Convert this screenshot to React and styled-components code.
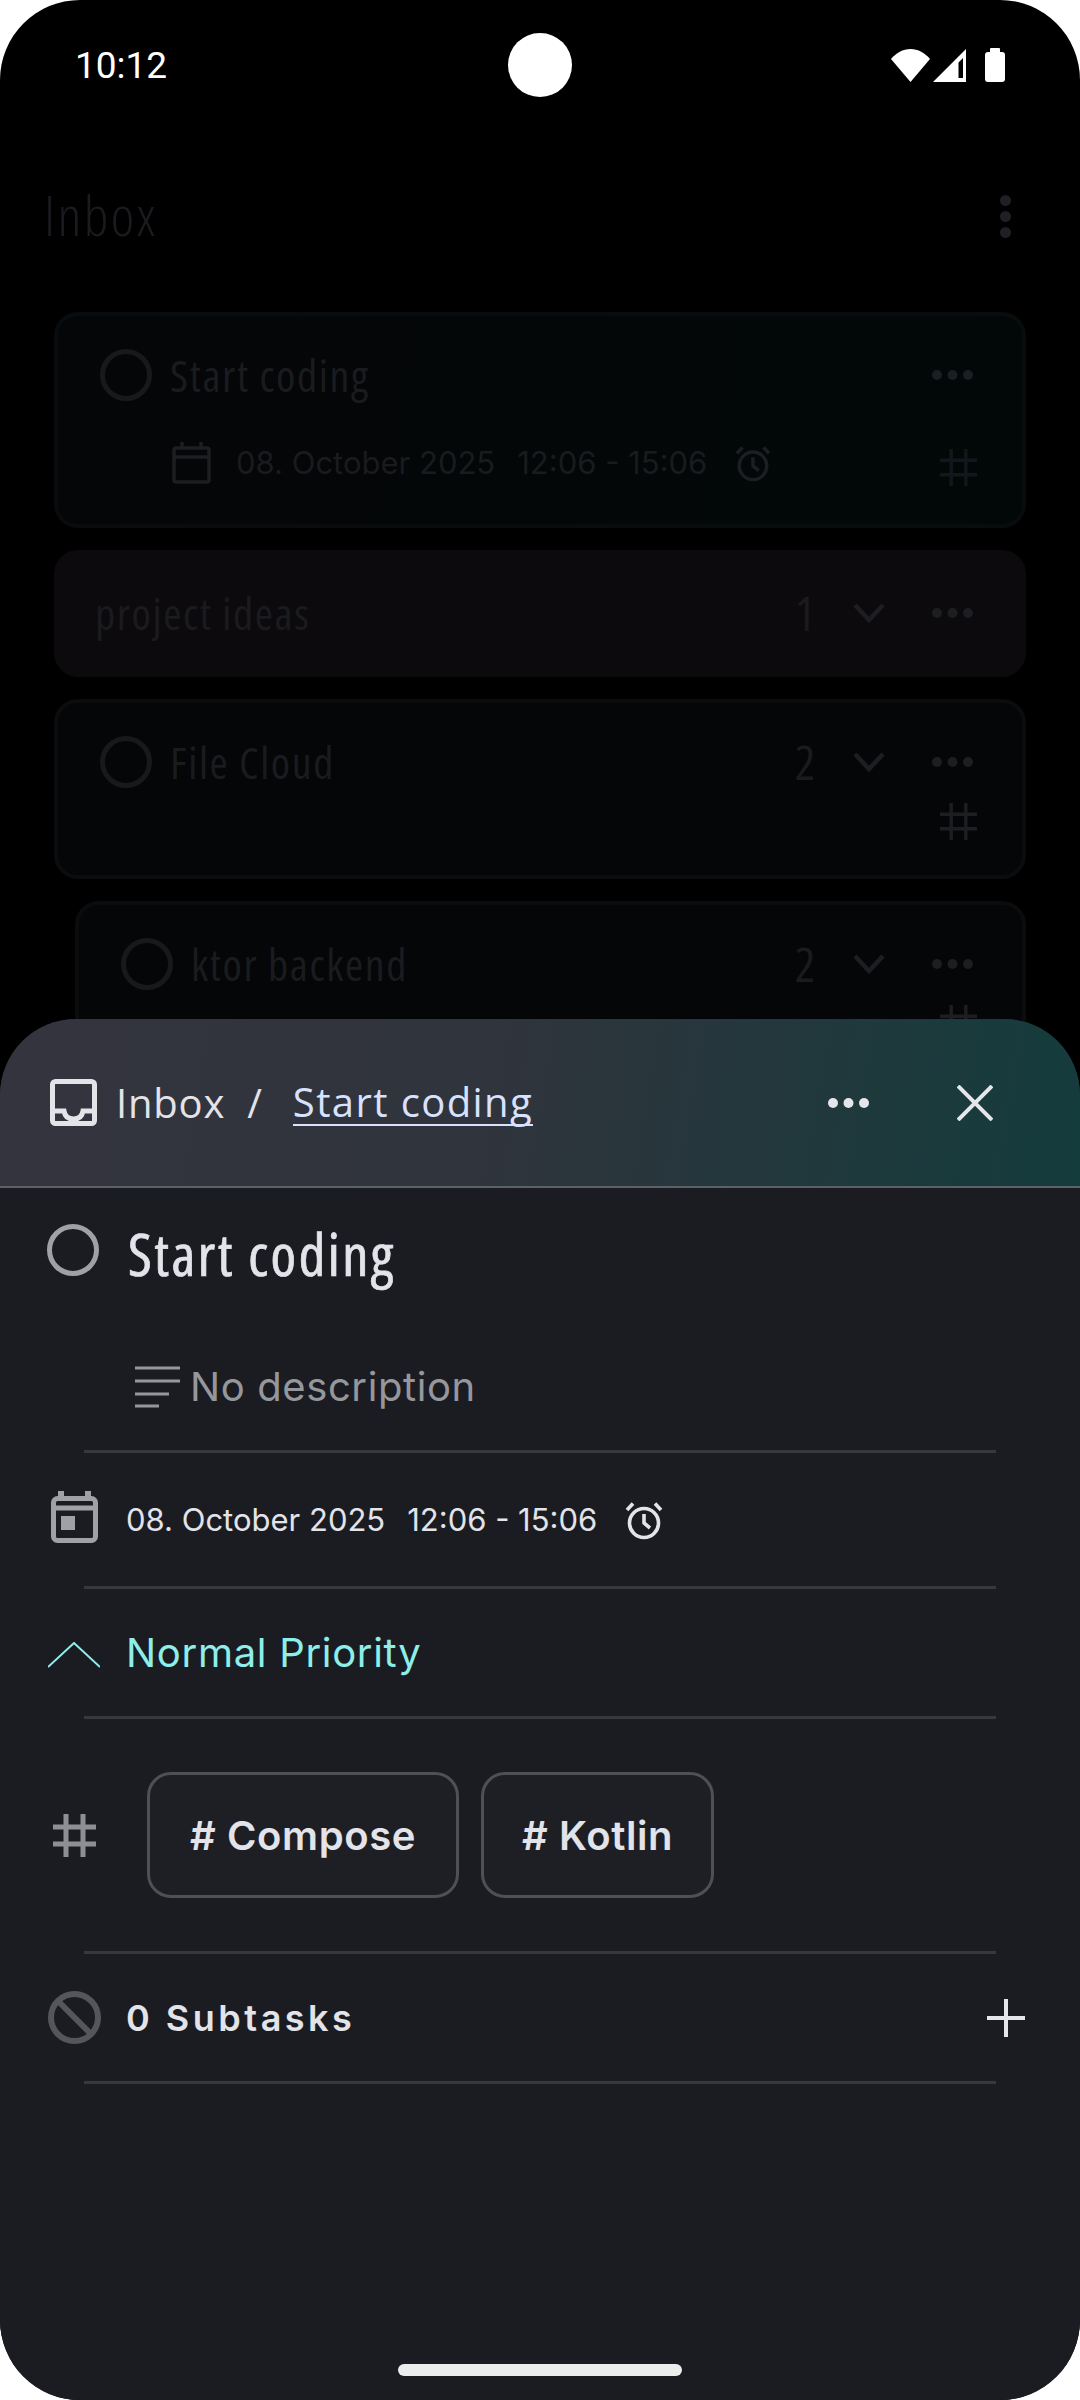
import React from "react";
import styled, { createGlobalStyle } from "styled-components";

const NARROW = `"Open Sans", Roboto, sans-serif`;
const SANS = `Inter, "Liberation Sans", sans-serif`;

const GlobalStyle = createGlobalStyle`
	html, body {
		margin: 0;
		padding: 0;
		background: #ffffff;
	}
`;

function Dots({ color = "#1d1e22" }) {
	return (
		<svg width="43" height="12" viewBox="0 0 43 12" fill={color}>
			<circle cx="6" cy="6" r="5" />
			<circle cx="21.5" cy="6" r="5" />
			<circle cx="37" cy="6" r="5" />
		</svg>
	);
}

function Hash({ color = "#8e8f93", size = 43, width = 5 }) {
	return (
		<svg width={size} height={size} viewBox="0 0 43 43" fill="none" stroke={color} strokeWidth={width}>
			<path d="M13 0V43M30 0V43M0 13H43M0 30H43" />
		</svg>
	);
}

function Chevron() {
	return (
		<svg width="32" height="20" viewBox="0 0 32 20" fill="none" stroke="#1d1e22" strokeWidth="4.5">
			<path d="M2 2L16 17L30 2" />
		</svg>
	);
}

function Alarm({ color, size = 40 }) {
	return (
		<AlarmSlot>
			<svg width={size} height={size} viewBox="0 0 40 40" fill="none" stroke={color} strokeWidth="3.6">
				<circle cx="20" cy="23" r="14.5" />
				<path d="M20 14V23L26 28M3 10L9 3.5M37 10L31 3.5" />
			</svg>
		</AlarmSlot>
	);
}

function TaskRow({ label, count, lastHash }) {
	return (
		<>
			<CardRow>
				<DimCircle />
				<DimTitle>{label}</DimTitle>
				{count && <DimCount>{count}</DimCount>}
				{count && <Chevron />}
				<DotsSlot>
					<Dots />
				</DotsSlot>
			</CardRow>
			{lastHash && (
				<HashRow>
					<Hash color="#1d1e22" size={37} width={4} />
				</HashRow>
			)}
		</>
	);
}

export default function App() {
	return (
		<>
			<GlobalStyle />
			<Phone>
				<StatusBar>
					<Clock>10:12</Clock>
					<Camera />
					<StatusIcons>
						<svg width="39" height="33" viewBox="0 0 39 33" fill="#fff">
							<path d="M0 10C5 4 12 0 19.5 0S34 4 39 10L19.5 33Z" />
						</svg>
						<svg width="33" height="33" viewBox="0 0 33 33" fill="#fff" fillRule="evenodd">
							<path d="M33 0V33H0ZM30 9L25.5 13.5V29H30Z" />
						</svg>
						<Battery />
					</StatusIcons>
				</StatusBar>

				<AppBar>
					<AppTitle>Inbox</AppTitle>
					<Kebab>
						<i />
						<i />
						<i />
					</Kebab>
				</AppBar>

				<List>
					<Card $height={216} $tone="linear-gradient(100deg,#050607,#020808)" $border="#090c0e">
						<TaskRow label="Start coding" />
						<MetaRow>
							<MetaIcon width="39" height="42" viewBox="0 0 39 42" fill="none" stroke="#1d1e22" strokeWidth="3.5">
								<rect x="2" y="6" width="35" height="34" rx="2" />
								<path d="M2 15H37M10 0V6M29 0V6" />
							</MetaIcon>
							<DimMeta>08. October 2025</DimMeta>
							<DimMeta>12:06 - 15:06</DimMeta>
							<Alarm color="#1d1e22" size={38} />
							<HashEnd>
								<Hash color="#15161d" size={37} width={4} />
							</HashEnd>
						</MetaRow>
					</Card>
					<Card $height={127} $tone="#0c0a0d" $border="#0c0a0d" $flat>
						<CardRow>
							<DimTitle>project ideas</DimTitle>
							<DimCount>1</DimCount>
							<Chevron />
							<DotsSlot>
								<Dots />
							</DotsSlot>
						</CardRow>
					</Card>
					<Card $height={180} $tone="#050607" $border="#0a0c0d">
						<TaskRow label="File Cloud" count="2" lastHash />
					</Card>
					<Card $height={180} $tone="#050607" $border="#0a0c0d" $nested>
						<TaskRow label="ktor backend" count="2" lastHash />
					</Card>
				</List>

				<Sheet>
					<SheetHeader>
						<svg width="47" height="47" viewBox="0 0 47 47" fill="none" stroke="#e3e3e8" strokeWidth="5">
							<rect x="2.5" y="2.5" width="42" height="42" rx="3" />
							<path d="M3 32H14C15 38 19 40 23.5 40S32 38 33 32H44" />
						</svg>
						<Crumb>Inbox</Crumb>
						<Slash>/</Slash>
						<CrumbLink>Start coding</CrumbLink>
						<HeaderActions>
							<Dots color="#e6e6ea" />
							<svg width="36" height="36" viewBox="0 0 36 36" fill="none" stroke="#e6e6ea" strokeWidth="4">
								<path d="M1 1L35 35M35 1L1 35" />
							</svg>
						</HeaderActions>
					</SheetHeader>

					<TitleRow>
						<TaskCircle />
						<TaskTitle>Start coding</TaskTitle>
					</TitleRow>

					<DescriptionRow>
						<svg width="45" height="42" viewBox="0 0 45 42" fill="none" stroke="#96979c" strokeWidth="3">
							<path d="M0 2H45M0 15H45M0 28H34M0 40H24" />
						</svg>
						<Description>No description</Description>
					</DescriptionRow>
					<Divider />

					<Row $height={133}>
						<IconSlot $shift={-5}>
							<svg width="47" height="52" viewBox="0 0 47 52" fill="none">
								<path d="M10 0V8M37 0V8" stroke="#a0a1a6" strokeWidth="6" />
								<rect x="2.5" y="7.5" width="42" height="42" rx="4" stroke="#a0a1a6" strokeWidth="5" />
								<path d="M2 17H45" stroke="#a0a1a6" strokeWidth="5" />
								<rect x="10" y="25" width="14" height="14" fill="#a0a1a6" />
							</svg>
						</IconSlot>
						<DateText>08. October 2025</DateText>
						<DateText>12:06 - 15:06</DateText>
						<Alarm color="#e3e3ea" />
					</Row>
					<Divider />

					<Row>
						<IconSlot $shift={4}>
							<svg width="52" height="26" viewBox="0 0 52 26" fill="none" stroke="#8eeeea" strokeWidth="2">
								<path d="M0 25L26 1L52 25" />
							</svg>
						</IconSlot>
						<Priority>Normal Priority</Priority>
					</Row>
					<Divider />

					<TagRow>
						<IconSlot>
							<Hash />
						</IconSlot>
						<Tag $pad={40}>
							<TagLabel># Compose</TagLabel>
						</Tag>
						<Tag $pad={38}>
							<TagLabel># Kotlin</TagLabel>
						</Tag>
					</TagRow>
					<Divider />

					<Row>
						<IconSlot>
							<svg width="53" height="53" viewBox="0 0 53 53" fill="none" stroke="#55565b" strokeWidth="6">
								<circle cx="26.5" cy="26.5" r="23.5" />
								<path d="M10 10L43 43" />
							</svg>
						</IconSlot>
						<Subtasks>0 Subtasks</Subtasks>
						<PlusSlot>
							<svg width="38" height="38" viewBox="0 0 38 38" fill="none" stroke="#e6e6ea" strokeWidth="4">
								<path d="M19 0V38M0 19H38" />
							</svg>
						</PlusSlot>
					</Row>
					<Divider />

					<HomePill />
				</Sheet>
			</Phone>
		</>
	);
}

const Phone = styled.div`
	position: relative;
	width: 1080px;
	height: 2400px;
	overflow: hidden;
	background: #000;
	border-radius: 80px;
`;

const StatusBar = styled.div`
	position: relative;
	height: 130px;
	display: flex;
	align-items: center;
	padding: 0 75px;
	box-sizing: border-box;
`;

const Clock = styled.span`
	font-family: Roboto, sans-serif;
	font-size: 37px;
	color: #fff;
`;

const Camera = styled.div`
	position: absolute;
	left: 508px;
	top: 33px;
	width: 64px;
	height: 64px;
	border-radius: 50%;
	background: #fff;
`;

const StatusIcons = styled.div`
	margin-left: auto;
	display: flex;
	align-items: center;
	gap: 3px;
`;

const Battery = styled.div`
	position: relative;
	width: 20px;
	height: 30px;
	margin-left: 16px;
	margin-top: 3px;
	border-radius: 3px;
	background: #fff;

	&::before {
		content: "";
		position: absolute;
		top: -4px;
		left: 5px;
		width: 10px;
		height: 4px;
		border-radius: 1px 1px 0 0;
		background: #fff;
	}
`;

const AppBar = styled.div`
	height: 182px;
	display: flex;
	align-items: flex-start;
	justify-content: space-between;
	padding: 53px 69px 0 44px;
	box-sizing: border-box;
`;

const AppTitle = styled.div`
	font-family: ${NARROW};
	font-stretch: 75%;
	font-weight: 300;
	font-size: 56px;
	letter-spacing: 2.4px;
	line-height: 62px;
	color: #1a1b1f;
`;

const Kebab = styled.div`
	display: flex;
	flex-direction: column;
	gap: 5px;
	padding-top: 12px;

	i {
		display: block;
		width: 11px;
		height: 11px;
		border-radius: 50%;
		background: #1f2024;
	}
`;

const List = styled.div`
	display: flex;
	flex-direction: column;
	gap: 22px;
	padding: 0 54px;
`;

const Card = styled.div`
	height: ${(p) => p.$height}px;
	margin-left: ${(p) => (p.$nested ? "21px" : "0")};
	padding: ${(p) => (p.$flat ? "33px 48px 0 37px" : "33px 48px 0 42px")};
	box-sizing: border-box;
	background: ${(p) => p.$tone};
	border: 4px solid ${(p) => p.$border};
	border-radius: 24px;
`;

const CardRow = styled.div`
	display: flex;
	align-items: center;
	height: 52px;
`;

const DimCircle = styled.div`
	width: 52px;
	height: 52px;
	border: 5px solid #19191c;
	border-radius: 50%;
	box-sizing: border-box;
	margin-right: 18px;
`;

const DimTitle = styled.span`
	font-family: ${NARROW};
	font-stretch: 75%;
	font-size: 44px;
	letter-spacing: 1.6px;
	line-height: 52px;
	color: #1a1b1e;
	margin-right: auto;
`;

const DimCount = styled.span`
	font-family: ${NARROW};
	font-stretch: 75%;
	font-size: 48px;
	letter-spacing: 1.8px;
	line-height: 52px;
	color: #1a1b1e;
	margin-right: 36px;
`;

const DotsSlot = styled.div`
	display: flex;
	margin-left: 46px;
`;

const HashRow = styled.div`
	display: flex;
	justify-content: flex-end;
	margin-top: 15px;
	margin-right: -3px;
`;

const MetaRow = styled.div`
	display: flex;
	align-items: center;
	gap: 22px;
	margin-top: 34px;
	margin-left: 72px;
`;

const MetaIcon = styled.svg`
	margin-right: 3px;
`;

const DimMeta = styled.span`
	font-family: ${SANS};
	font-size: 31px;
	color: #1a1b1e;
`;

const AlarmSlot = styled.div`
	display: flex;
	margin-left: 5px;
`;

const HashEnd = styled.div`
	margin-left: auto;
	margin-top: 14px;
	margin-right: -3px;
`;

const Sheet = styled.div`
	position: absolute;
	left: 0;
	right: 0;
	top: 1019px;
	bottom: 0;
	background: #1b1c22;
	border-radius: 76px 76px 0 0;
	overflow: hidden;
`;

const SheetHeader = styled.div`
	height: 169px;
	box-sizing: border-box;
	display: flex;
	align-items: center;
	padding-left: 50px;
	background: linear-gradient(100deg, #34343e 0%, #30343c 45%, #143c3c 100%);
	border-bottom: 2px solid #5c6165;
`;

const Crumb = styled.span`
	font-family: ${NARROW};
	font-size: 40px;
	letter-spacing: 0.8px;
	color: #e3e3e8;
	margin-left: 19px;
`;

const Slash = styled.span`
	font-family: ${NARROW};
	font-size: 40px;
	color: #e3e3e8;
	margin-left: 22px;
`;

const CrumbLink = styled.span`
	font-family: ${NARROW};
	font-size: 40px;
	letter-spacing: 1.4px;
	color: #d8e2ff;
	margin-left: 31px;
	border-bottom: 2px solid #d8e2ff;
	line-height: 44px;
`;

const HeaderActions = styled.div`
	margin-left: auto;
	display: flex;
	align-items: center;
	gap: 87px;
	padding-right: 87px;
`;

const TitleRow = styled.div`
	height: 135px;
	box-sizing: border-box;
	display: flex;
	align-items: flex-start;
	padding: 36px 0 0 47px;
	gap: 29px;
`;

const TaskCircle = styled.div`
	width: 52px;
	height: 52px;
	border: 5px solid #a0a1a5;
	border-radius: 50%;
	box-sizing: border-box;
`;

const TaskTitle = styled.div`
	font-family: ${NARROW};
	font-stretch: 75%;
	font-weight: 500;
	font-size: 58px;
	letter-spacing: 2.5px;
	-webkit-text-stroke: 0.7px #e3e3ea;
	line-height: 60px;
	color: #e3e3ea;
`;

const DescriptionRow = styled.div`
	height: 127px;
	box-sizing: border-box;
	display: flex;
	align-items: center;
	padding-left: 135px;
	gap: 10px;
`;

const Description = styled.span`
	font-family: ${SANS};
	font-size: 40px;
	letter-spacing: 0.6px;
	color: #96979c;
`;

const Divider = styled.div`
	height: 3px;
	margin: 0 84px;
	background: #37383d;
`;

const Row = styled.div`
	height: ${(p) => p.$height || 127}px;
	box-sizing: border-box;
	display: flex;
	align-items: center;
	padding-left: 46px;
`;

const TagRow = styled(Row)`
	height: 232px;
`;

const IconSlot = styled.div`
	width: 56px;
	margin-right: 24px;
	margin-top: ${(p) => p.$shift || 0}px;
	display: flex;
	justify-content: center;
	align-items: center;
`;

const DateText = styled.span`
	font-family: ${SANS};
	font-size: 31px;
	color: #e3e3ea;
	margin-right: 22px;
`;

const Priority = styled.span`
	font-family: ${SANS};
	font-size: 40px;
	letter-spacing: 0.7px;
	color: #8eeeea;
`;

const Tag = styled.div`
	height: 126px;
	box-sizing: border-box;
	display: flex;
	align-items: center;
	padding: 0 ${(p) => p.$pad}px;
	margin-right: 22px;
	background: #1e1f25;
	border: 3px solid #4f5055;
	border-radius: 24px;

	&:nth-child(2) {
		margin-left: 21px;
	}
`;

const TagLabel = styled.span`
	font-family: ${SANS};
	font-size: 40px;
	letter-spacing: 0.6px;
	font-weight: 600;
	color: #e3e3ea;
`;

const Subtasks = styled.span`
	font-family: ${SANS};
	font-size: 36px;
	font-weight: 600;
	letter-spacing: 3.5px;
	color: #e3e3ea;
`;

const PlusSlot = styled.div`
	margin-left: auto;
	display: flex;
	padding-right: 55px;
`;

const HomePill = styled.div`
	position: absolute;
	left: 398px;
	bottom: 24px;
	width: 284px;
	height: 12px;
	border-radius: 6px;
	background: #ececec;
`;
